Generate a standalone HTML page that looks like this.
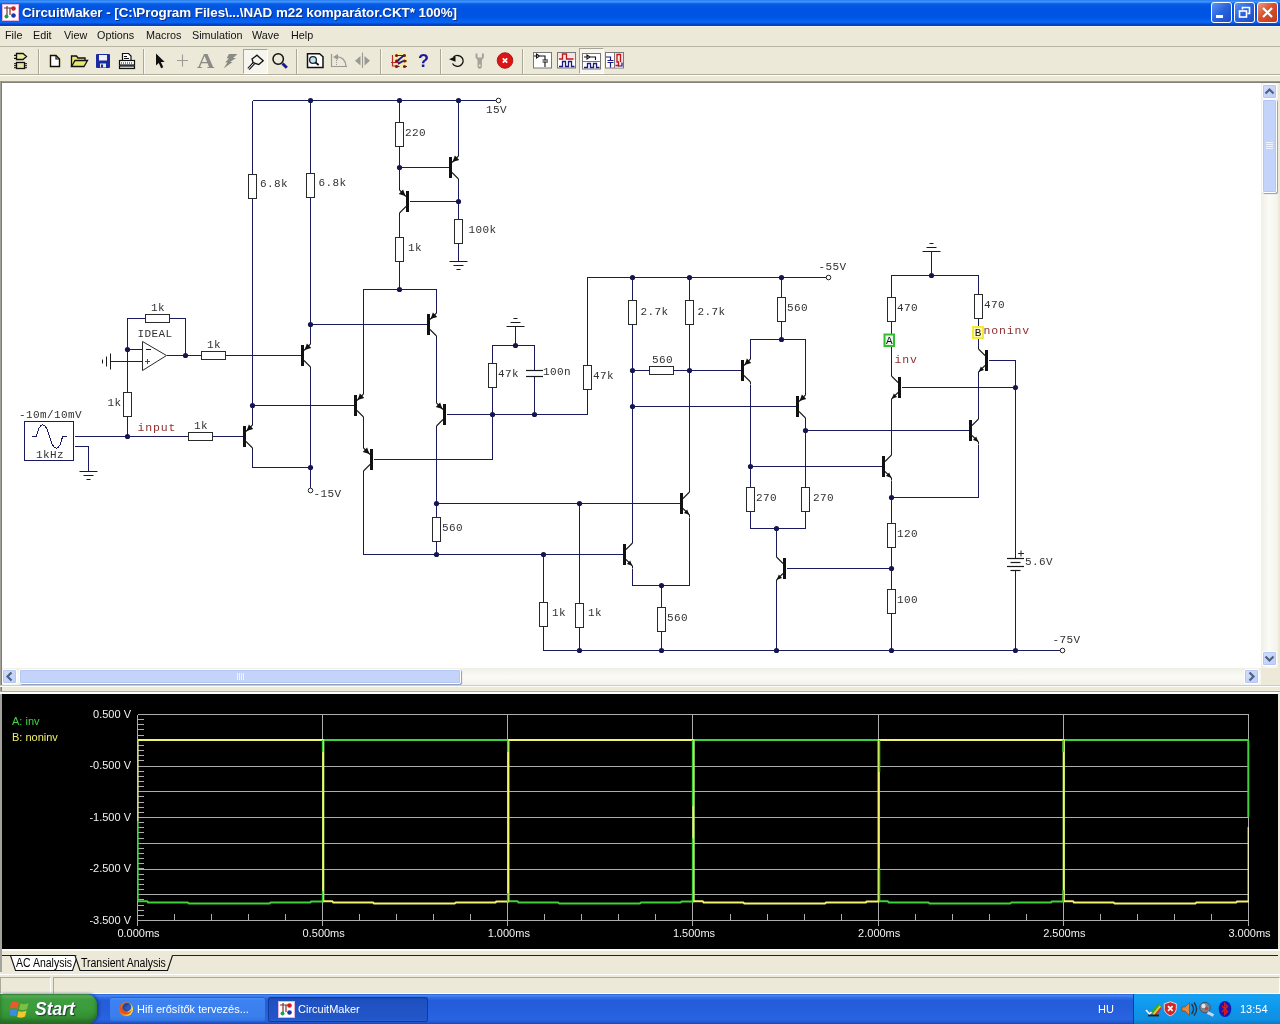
<!DOCTYPE html>
<html><head><meta charset="utf-8"><title>CircuitMaker</title>
<style>
html,body{margin:0;padding:0}
body{width:1280px;height:1024px;overflow:hidden;background:#ece9d8;position:relative;font-family:"Liberation Sans",sans-serif}
.abs{position:absolute}
svg{position:absolute;left:0;top:0}
#root{position:absolute;left:0;top:0;width:1280px;height:1024px;will-change:transform;overflow:hidden}
.w{stroke:#1a1a5e;stroke-width:1;fill:none;shape-rendering:crispEdges}
.k{stroke:#1a1a1a}
.d{fill:#15154f}
.t{fill:#fff;stroke:#222;stroke-width:1}
.r{fill:#fff;stroke:#2a2a2a;stroke-width:1}
.g{fill:#fff;stroke:#1a1a5e;stroke-width:1}
.b{fill:#111}
.a{fill:#111}
.tx{font-family:"Liberation Mono",monospace;font-size:11px;fill:#313131;letter-spacing:0.4px}
.lb{font-family:"Liberation Mono",monospace;font-size:11.5px;fill:#8f3030;letter-spacing:0.85px}
.pb{font-family:"Liberation Mono",monospace;font-size:11px;fill:#111}

#title{left:0;top:0;width:1280px;height:26px;background:linear-gradient(to bottom,#2a7af0 0px,#3d95fa 1.5px,#2c84f6 2.5px,#0f66ea 3.5px,#0458e2 5px,#0054e3 8px,#0054e3 17px,#035ae8 19px,#0864f0 21px,#0a62ee 22.5px,#0750d8 23.5px,#0444c4 24.5px,#0a3fb4 26px)}
#title .txt{left:22px;top:5px;color:#fff;font-weight:bold;font-size:13.4px;white-space:nowrap;text-shadow:1px 1px 0 #0a2f8a;letter-spacing:-0.05px}
.wb{top:2px;width:19px;height:19px;border:1px solid #fff;border-radius:3px;background:linear-gradient(135deg,#5a94f4 0%,#2a62dc 50%,#1c4cc8 100%)}
#menu{left:0;top:26px;width:1280px;height:20px;background:#ece9d8;border-top:1px solid #f4f3ec;box-sizing:border-box}
#menu span{position:absolute;top:2px;font-size:10.8px;color:#111;white-space:nowrap}
#tb{left:0;top:47px;width:1280px;height:27px;background:#ece9d8}
.hl{left:0;width:1280px;height:1px}
.sep{top:49px;width:1px;height:25px;background:#aca899;border-right:1px solid #f8f7f0}
#canvas{left:2px;top:83px;width:1259px;height:585px;background:#fff}
#vsb{left:1261px;top:83px;width:17px;height:585px;background:linear-gradient(to right,#f0efe6,#fbfbf7 50%,#f3f2ea)}
#hsb{left:2px;top:668px;width:1259px;height:17px;background:linear-gradient(to bottom,#f0efe6,#fbfbf7 50%,#f3f2ea)}
.sbtn{width:13px;height:13px;border:1px solid #fff;border-radius:2px;background:linear-gradient(135deg,#d4defb,#bccdf7);box-shadow:0 0 0 1px #b5c6f0 inset}
.thumb{border:1px solid #fff;border-radius:2px;background:#c3d3fa;box-shadow:0 0 0 1px #b4c6f2 inset, 1px 1px 1px #8a9ac0}
#tabs{left:0;top:949px;width:1280px;height:25px;background:#ece9d8}
#status{left:0;top:974px;width:1280px;height:20px;background:#ece9d8}
#task{left:0;top:994px;width:1280px;height:30px;background:linear-gradient(to bottom,#1f55c8 0%,#4a8af0 4%,#2f6ee8 12%,#245cda 22%,#255fdc 55%,#2864e2 85%,#2258d0 94%,#1a44b4 100%)}
#start{left:0;top:0;width:97px;height:30px;border-radius:0 11px 11px 0;background:linear-gradient(to bottom,#2f7e2f 0%,#55aa55 6%,#3f9e3f 18%,#3a9c3a 50%,#338f33 80%,#2a782a 100%);box-shadow:2px 0 3px #1a3f9a, inset 0 -3px 4px #256a25}
#start span{position:absolute;left:35px;top:5px;color:#fff;font-weight:bold;font-style:italic;font-size:17.5px;text-shadow:1px 1px 1px #234}
.tbtn{top:3px;height:25px;border-radius:3px;color:#fff;font-size:11px;white-space:nowrap}
.tbtn span{position:absolute;left:28px;top:6px}
#tray{left:1133px;top:0;width:147px;height:30px;background:linear-gradient(to bottom,#1c9df0 0%,#12a0f2 15%,#0f96ea 50%,#0f8fe2 85%,#0b78c8 100%);border-left:1px solid #0a3f9c}

#gpanel{left:2px;top:694px;width:1276px;height:255px;background:#000}
.gl{stroke:#adadad;stroke-width:1;shape-rendering:crispEdges}
.gt{font-family:"Liberation Sans",sans-serif;font-size:11px;fill:#f2f2f2}
</style></head><body><div id="root">

<div class="abs" id="title"><div class="abs txt">CircuitMaker - [C:\Program Files\...\NAD m22 komparátor.CKT* 100%]</div>
<svg class="abs" style="left:2px;top:4px" width="17" height="17" viewBox="0 0 17 17"><rect x="0.5" y="0.5" width="16" height="16" fill="#fff" stroke="#e8b0d8"/><path d="M2,4h8M5,2v9M8,4v7" stroke="#803030" stroke-width="1.2" fill="none"/><circle cx="11.5" cy="4.5" r="2.3" fill="#d02020"/><circle cx="11.5" cy="11.5" r="2.3" fill="#2030b0"/><circle cx="4.5" cy="12.5" r="2" fill="#20a040"/></svg>
<div class="abs wb" style="left:1211px"><div class="abs" style="left:4px;top:12px;width:7px;height:3px;background:#fff"></div></div>
<div class="abs wb" style="left:1234px"><svg class="abs" style="left:3px;top:3px" width="13" height="13"><path d="M4.5,3.5v-2h7v6h-2" fill="none" stroke="#fff" stroke-width="1.6"/><rect x="1.5" y="5" width="7" height="6" fill="none" stroke="#fff" stroke-width="1.6"/></svg></div>
<div class="abs wb" style="left:1257px;background:linear-gradient(135deg,#ea9a80 0%,#d8502c 45%,#c03a1c 100%)"><svg class="abs" style="left:3px;top:3px" width="13" height="13"><path d="M2,2l9,9M11,2l-9,9" stroke="#fff" stroke-width="2.2"/></svg></div>
</div>
<div class="abs" id="menu"><span style="left:5px">File</span><span style="left:33px">Edit</span><span style="left:64px">View</span><span style="left:97px">Options</span><span style="left:146px">Macros</span><span style="left:192px">Simulation</span><span style="left:252px">Wave</span><span style="left:291px">Help</span></div>
<div class="abs hl" style="top:46px;background:#b8b5a4"></div><div class="abs hl" style="top:47px;background:#fbfaf6"></div>
<div class="abs" id="tb"></div>
<div class="abs hl" style="top:74px;background:#b0ad9c"></div>
<div class="abs hl" style="top:75px;background:#fff"></div>
<div class="abs hl" style="top:81px;height:2px;background:linear-gradient(to bottom,#aaa89c,#77756c)"></div>
<div class="abs" style="left:0;top:81px;width:2px;height:612px;background:linear-gradient(to right,#b4b2a8,#6c6a62)"></div><div class="abs" style="left:0;top:693px;width:2px;height:258px;background:#a4a39c"></div>
<div class="abs sep" style="left:38px"></div>
<div class="abs sep" style="left:143px"></div>
<div class="abs sep" style="left:296px"></div>
<div class="abs sep" style="left:380px"></div>
<div class="abs sep" style="left:440px"></div>
<div class="abs sep" style="left:522px"></div>
<svg class="abs" style="left:13px;top:52px" width="16" height="18" viewBox="0 0 16 18"><path d="M1,3.300h2.500M1,6.300h2.500M3.500,1.500h6.500l3.500,3l-3.500,3h-6.500z" fill="#ececa0" stroke="#111" stroke-width="1.300"/><path d="M1,11.700h2.500M1,13.700h2.500M1,15.700h2.500M11.500,11.700h2.500M11.500,13.700h2.500M11.500,15.700h2.500" stroke="#111" stroke-width="1"/><rect x="3.500" y="10.500" width="8" height="6" fill="#e6e6a4" stroke="#111" stroke-width="1.300"/></svg>
<div class="abs" style="left:46px;top:51px;width:18px;height:20px;background:radial-gradient(closest-side,rgba(240,240,120,0.55),rgba(240,240,120,0))"></div>
<svg class="abs" style="left:49px;top:54px" width="12" height="14" viewBox="0 0 12 14"><path d="M1.5,1.5h5.5l3.5,3.5v7.5h-9z" fill="#fff" stroke="#111" stroke-width="1.4"/><path d="M7,1.5v3.5h3.5" fill="none" stroke="#111" stroke-width="1.2"/></svg>
<svg class="abs" style="left:70px;top:54px" width="19" height="14" viewBox="0 0 19 14"><path d="M1.5,12.5v-10.5h5l1.5,2h7v3" fill="#e8e870" stroke="#111" stroke-width="1.3"/><path d="M1.5,12.5l3.5-6h12.5l-3.5,6z" fill="#e8e870" stroke="#111" stroke-width="1.3"/></svg>
<svg class="abs" style="left:95px;top:53px" width="16" height="16" viewBox="0 0 16 16"><rect x="1" y="1" width="14" height="14" rx="1" fill="#1a2aa0"/><rect x="4" y="2" width="8" height="5.5" fill="#f0f0f0"/><rect x="4.5" y="10" width="7" height="5" fill="#1a2aa0" stroke="#ddd" stroke-width="0"/><rect x="5" y="10.5" width="6" height="4" fill="#e8e8e8"/><rect x="6" y="11.5" width="2" height="3" fill="#1a2aa0"/></svg>
<svg class="abs" style="left:118px;top:52px" width="18" height="18" viewBox="0 0 18 18"><path d="M4.5,8v-6.5h6l2.5,2.5v4" fill="#fff" stroke="#111" stroke-width="1.2"/><path d="M6,4.5h3M6,6.5h5" stroke="#111" stroke-width="1"/><rect x="1.5" y="8.5" width="15" height="4.5" fill="#fff" stroke="#111" stroke-width="1.2"/><path d="M3,11h12" stroke="#111" stroke-width="1" stroke-dasharray="1,1"/><rect x="1.5" y="14" width="15" height="2.5" fill="#ddd" stroke="#111" stroke-width="1.2"/></svg>
<svg class="abs" style="left:154px;top:52px" width="14" height="18" viewBox="0 0 14 18"><path d="M2,1.500v12l2.800-2.600l2.300,5.300l2.200-1l-2.400-5.200h3.800z" fill="#111"/></svg>
<svg class="abs" style="left:176px;top:54px" width="13" height="13" viewBox="0 0 13 13"><path d="M6.500,0.500v12M1,6.500h11" stroke="#9c9c94" stroke-width="1.100"/></svg>
<div class="abs" style="left:197px;top:48px;font-family:'Liberation Serif',serif;font-weight:bold;font-size:22px;color:#8c8c86;transform:scaleX(1.1);transform-origin:0 0">A</div>
<svg class="abs" style="left:222px;top:53px" width="17" height="16" viewBox="0 0 17 16"><path d="M7,1h8.500l-4.500,4h3l-6,4h2.500l-9,6.500l4-6h-2.200l3.600-4.200h-2.200z" fill="#8a8a84"/></svg>
<div class="abs" style="left:243px;top:49px;width:23px;height:23px;background:#f6f5ee;border:1px solid #fff;border-top-color:#a8a69a;border-left-color:#a8a69a"></div>
<svg class="abs" style="left:246px;top:52px" width="20" height="19" viewBox="0 0 20 19"><path d="M2.500,17l5.500-6" stroke="#111" stroke-width="3"/><path d="M2.500,17l5.500-6" stroke="#fff" stroke-width="1"/><path d="M11,3.200l6.200,5.600l-4.400,3.800l-5.600-1.900l-1.200-3.700z" fill="#f6f5ee" stroke="#111" stroke-width="1.300"/></svg>
<svg class="abs" style="left:271px;top:52px" width="18" height="18" viewBox="0 0 18 18"><circle cx="7.200" cy="7" r="5.200" fill="none" stroke="#111" stroke-width="1.500"/><path d="M11.500,11.500l4.300,4.300" stroke="#1a1a90" stroke-width="3"/></svg>
<svg class="abs" style="left:306px;top:52px" width="19" height="17" viewBox="0 0 19 17"><path d="M1.500,1.800h12l3.500,3v10.700h-15.500z" fill="#fff" stroke="#111" stroke-width="1.500"/><circle cx="7" cy="8" r="3.400" fill="#bfe8e8" stroke="#223" stroke-width="1.300"/><path d="M9.500,10.500l3.200,2.500" stroke="#111" stroke-width="1.800"/></svg>
<svg class="abs" style="left:330px;top:52px" width="18" height="18" viewBox="0 0 18 18"><path d="M1.500,2v12.500h15.500" fill="none" stroke="#9a9a92" stroke-width="1.200"/><path d="M6,5c6,-1 10,4 10,9.500" fill="none" stroke="#9a9a92" stroke-width="1.300"/><path d="M3,5l5-3v6z" fill="#9a9a92"/><path d="M6.500,8v6" stroke="#9a9a92" stroke-width="1" stroke-dasharray="1,1"/></svg>
<svg class="abs" style="left:354px;top:52px" width="18" height="17" viewBox="0 0 18 17"><path d="M6.500,4v9.500l-5.500-4.750z M10.500,4v9.500l5.500-4.750z" fill="#9a9a92"/><path d="M8.500,0.500v15.500" stroke="#9a9a92" stroke-width="1.100"/></svg>
<svg class="abs" style="left:389px;top:51px" width="20" height="19" viewBox="0 0 20 19"><circle cx="11" cy="9" r="8" fill="#f6ee90" opacity="0.650"/><path d="M3.500,4v11h6" stroke="#c02828" stroke-width="1.200" fill="none"/><path d="M2,11.500h8" stroke="#c02828" stroke-width="1"/><path d="M7.500,4.500h8M7.500,10h3M14,10h4M7.500,15.500h3M14,15.500h4" stroke="#6a1a1a" stroke-width="1"/><path d="M7.500,10.500l8-6.500M9,13l5-3" stroke="#1a1a98" stroke-width="1.700" fill="none"/><circle cx="7.500" cy="4.500" r="1.500" fill="#7a1414"/><circle cx="15.500" cy="4.500" r="1.500" fill="#7a1414"/><circle cx="7.500" cy="10" r="1.500" fill="#7a1414"/><circle cx="15.500" cy="10" r="1.500" fill="#7a1414"/><circle cx="7.500" cy="15.500" r="1.500" fill="#7a1414"/><circle cx="15.500" cy="15.500" r="1.500" fill="#7a1414"/></svg>
<div class="abs" style="left:418px;top:51px;font-weight:bold;font-size:18px;color:#1a1aa0">?</div>
<svg class="abs" style="left:447px;top:52px" width="20" height="18" viewBox="0 0 20 18"><path d="M6.500,5a5.700,5.400 0 1 1 -1,6.500" fill="none" stroke="#111" stroke-width="1.300"/><path d="M2,7.300l6.500-3v5.500z" fill="#111"/></svg>
<svg class="abs" style="left:474px;top:52px" width="12" height="18" viewBox="0 0 12 18"><path d="M1.500,1.500v4l2,2.500v6.500a2.200,2.200 0 0 0 4.400,0v-6.500l2-2.500v-4h-2v4h-4.400v-4z" fill="#a4a49c"/><circle cx="5.700" cy="13.500" r="1" fill="#ece9d8"/></svg>
<svg class="abs" style="left:496px;top:52px" width="18" height="18" viewBox="0 0 18 18"><circle cx="9" cy="8.500" r="7.800" fill="#dc1414" stroke="#9a0a0a" stroke-width="0.800"/><path d="M6.800,6.300l4.400,4.400M11.200,6.300l-4.400,4.400" stroke="#fff" stroke-width="1.800"/></svg>
<svg class="abs" style="left:533px;top:52px" width="19" height="17" viewBox="0 0 19 17"><rect x="0.500" y="0.500" width="18" height="15.500" fill="#fff" stroke="#777" stroke-width="1"/><path d="M1,4h2.500M3.500,2v4l3-2zM6.500,4h5.500v3.500M9.500,8h5.500M9.500,10h5.500M12,10v5" fill="none" stroke="#111" stroke-width="1.100"/></svg>
<svg class="abs" style="left:557px;top:52px" width="19" height="17" viewBox="0 0 19 17"><rect x="0.500" y="0.500" width="18" height="15.500" fill="#fff" stroke="#777" stroke-width="1"/><rect x="1" y="1" width="17" height="7" fill="#f6e4e4"/><path d="M2,7h3.500v-5h4v5h7" fill="none" stroke="#c01818" stroke-width="1.300"/><path d="M2,14.500h3.500v-5h3v5h3v-5h3v5h3" fill="none" stroke="#1a1a80" stroke-width="1.300"/></svg>
<div class="abs" style="left:579px;top:48px;width:23px;height:24px;background:#f6f5ee;border:1px solid #fff;border-top-color:#a8a69a;border-left-color:#a8a69a"></div>
<svg class="abs" style="left:582px;top:53px" width="19" height="17" viewBox="0 0 19 17"><rect x="0.500" y="0.500" width="18" height="15.500" fill="#fff" stroke="#777" stroke-width="1"/><path d="M1,8.500h17" stroke="#777" stroke-width="1"/><path d="M2,4h3M5,2v4l3-2zM8,4h5.500v3" fill="none" stroke="#111" stroke-width="1.100"/><path d="M2,14.500h3.500v-4h3v4h3v-4h3v4h3" fill="none" stroke="#1a1a80" stroke-width="1.300"/></svg>
<svg class="abs" style="left:605px;top:52px" width="19" height="17" viewBox="0 0 19 17"><rect x="0.500" y="0.500" width="18" height="15.500" fill="#fff" stroke="#777" stroke-width="1"/><rect x="9.500" y="1" width="8.500" height="14.500" fill="#f6e4e4"/><path d="M9.500,0.500v15.500" stroke="#777" stroke-width="1"/><path d="M1,5h4.500v3M2.500,8.500h6M2.500,10.500h6M5.500,10.500v5" fill="none" stroke="#1a1a80" stroke-width="1.200"/><path d="M10.500,13.500h3v-3.500h-1.500v-7.500h3.500v7.500" fill="none" stroke="#c01818" stroke-width="1.300"/><path d="M13,14h4v-3.500" fill="none" stroke="#1a1a80" stroke-width="1.200"/></svg>
<div class="abs" id="canvas"></div>
<div class="abs" id="vsb">
 <div class="abs sbtn" style="left:1px;top:1px"><svg class="abs" style="left:1px;top:2px" width="11" height="9"><path d="M1.5,6.5l4-4l4,4" fill="none" stroke="#4d6185" stroke-width="2.2"/></svg></div>
 <div class="abs thumb" style="left:1px;top:16px;width:13px;height:92px"><svg class="abs" style="left:3px;top:42px" width="8" height="8"><path d="M0,0.5h7M0,2.5h7M0,4.5h7M0,6.5h7" stroke="#eef3ff" stroke-width="1"/></svg></div>
 <div class="abs sbtn" style="left:1px;top:568px"><svg class="abs" style="left:1px;top:2px" width="11" height="9"><path d="M1.5,2.5l4,4l4-4" fill="none" stroke="#4d6185" stroke-width="2.2"/></svg></div>
</div>
<div class="abs" id="hsb">
 <div class="abs sbtn" style="left:0px;top:1px"><svg class="abs" style="left:2px;top:1px" width="9" height="11"><path d="M6.5,1.5l-4,4l4,4" fill="none" stroke="#4d6185" stroke-width="2.2"/></svg></div>
 <div class="abs thumb" style="left:17px;top:1px;width:440px;height:13px"><svg class="abs" style="left:217px;top:3px" width="8" height="8"><path d="M0.5,0v7M2.5,0v7M4.5,0v7M6.5,0v7" stroke="#eef3ff" stroke-width="1"/></svg></div>
 <div class="abs sbtn" style="left:1242px;top:1px"><svg class="abs" style="left:2px;top:1px" width="9" height="11"><path d="M2.5,1.5l4,4l-4,4" fill="none" stroke="#4d6185" stroke-width="2.2"/></svg></div>
</div>
<div class="abs" style="left:1261px;top:668px;width:19px;height:18px;background:#ece9d8"></div><div class="abs" style="left:1278px;top:83px;width:2px;height:600px;background:#ece9d8"></div>
<div class="abs hl" style="top:685px;background:#cfcdbf"></div><div class="abs hl" style="top:686px;background:#fdfdfa"></div>
<div class="abs hl" style="top:691px;background:#aca899"></div>
<div class="abs hl" style="top:692px;height:2px;background:#fff"></div>

<svg id="schem" width="1280" height="690" viewBox="0 0 1280 690">
<polyline class="w" points="252.5,100.5 495.5,100.5"/>
<circle class="t" cx="498.5" cy="100.5" r="2.3"/>
<text class="tx" x="486.0" y="112.7">15V</text>
<polyline class="w" points="252.5,100.5 252.5,174.5"/>
<rect class="r" x="248.5" y="174.5" width="8" height="24"/>
<polyline class="w" points="252.5,198.5 252.5,423.5"/>
<text class="tx" x="260.0" y="187.2">6.8k</text>
<polyline class="w" points="310.5,100.5 310.5,173.5"/>
<rect class="r" x="306.5" y="173.5" width="8" height="24"/>
<polyline class="w" points="310.5,197.5 310.5,343.5"/>
<text class="tx" x="318.5" y="186.2">6.8k</text>
<polyline class="w" points="310.5,368.5 310.5,487.5"/>
<circle class="t" cx="310.5" cy="490.5" r="2.3"/>
<text class="tx" x="313.5" y="496.7">-15V</text>
<polyline class="w" points="252.5,449.5 252.5,467.5 310.5,467.5"/>
<polyline class="w" points="399.5,100.5 399.5,122.5"/>
<rect class="r" x="395.5" y="122.5" width="8" height="24"/>
<polyline class="w" points="399.5,146.5 399.5,189.5"/>
<text class="tx" x="405.0" y="135.7">220</text>
<polyline class="w" points="399.5,167.5 449.5,167.5"/>
<polyline class="w" points="399.5,213.5 399.5,237.5"/>
<rect class="r" x="395.5" y="237.5" width="8" height="24"/>
<polyline class="w" points="399.5,261.5 399.5,289.5"/>
<text class="tx" x="408.0" y="250.7">1k</text>
<polyline class="w" points="458.5,100.5 458.5,155.5"/>
<polyline class="w" points="458.5,179.5 458.5,219.5"/>
<rect class="r" x="454.5" y="219.5" width="8" height="24"/>
<polyline class="w" points="458.5,243.5 458.5,261.5"/>
<text class="tx" x="468.5" y="232.7">100k</text>
<polyline class="w" points="409.5,201.5 458.5,201.5"/>
<line class="k" x1="449.5" y1="261.5" x2="467.5" y2="261.5" stroke-width="1"/>
<line class="k" x1="453.5" y1="265.5" x2="463.5" y2="265.5" stroke-width="1"/>
<line class="k" x1="456.5" y1="269.5" x2="460.5" y2="269.5" stroke-width="1"/>
<polyline class="w" points="363.5,393.5 363.5,289.5 436.5,289.5 436.5,311.5"/>
<polyline class="w" points="310.5,324.5 427.5,324.5"/>
<polyline class="w" points="436.5,337.5 436.5,402.5"/>
<polyline class="w" points="436.5,427.5 436.5,517.5"/>
<rect class="r" x="432.5" y="517.5" width="8" height="24"/>
<polyline class="w" points="436.5,541.5 436.5,554.5"/>
<text class="tx" x="442.0" y="530.7">560</text>
<polyline class="w" points="252.5,405.5 354.5,405.5"/>
<polyline class="w" points="363.5,418.5 363.5,447.5"/>
<polyline class="w" points="363.5,472.5 363.5,554.5 623.5,554.5"/>
<polyline class="w" points="373.5,459.5 492.5,459.5 492.5,387.5"/>
<rect class="r" x="488.5" y="363.5" width="8" height="24"/>
<polyline class="w" points="492.5,363.5 492.5,345.5 534.5,345.5 534.5,370.5"/>
<polyline class="w" points="534.5,376.5 534.5,414.5"/>
<text class="tx" x="498.0" y="377.2">47k</text>
<text class="tx" x="543.0" y="375.2">100n</text>
<polyline class="w" points="446.5,414.5 587.5,414.5 587.5,389.5"/>
<rect class="r" x="583.5" y="365.5" width="8" height="24"/>
<text class="tx" x="593.0" y="379.2">47k</text>
<polyline class="w" points="587.5,365.5 587.5,277.5 826.5,277.5"/>
<circle class="t" cx="828.5" cy="277.5" r="2.3"/>
<text class="tx" x="818.5" y="269.7">-55V</text>
<polyline class="w" points="515.5,326.5 515.5,345.5"/>
<line class="k" x1="506.5" y1="326.5" x2="524.5" y2="326.5" stroke-width="1"/>
<line class="k" x1="510.5" y1="322.5" x2="520.5" y2="322.5" stroke-width="1"/>
<line class="k" x1="513.5" y1="318.5" x2="517.5" y2="318.5" stroke-width="1"/>
<line class="k" x1="526.0" y1="370.5" x2="543.0" y2="370.5" stroke-width="1.2"/>
<line class="k" x1="526.0" y1="376.5" x2="543.0" y2="376.5" stroke-width="1.2"/>
<polyline class="w" points="127.5,349.5 127.5,318.5 145.5,318.5"/>
<rect class="r" x="145.5" y="314.5" width="24" height="8"/>
<polyline class="w" points="169.5,318.5 185.5,318.5 185.5,355.5"/>
<text class="tx" x="151.0" y="310.7">1k</text>
<text class="tx" x="137.5" y="337.2">IDEAL</text>
<polyline class="w" points="127.5,349.5 142.5,349.5"/>
<polyline class="w" points="110.5,361.5 142.5,361.5"/>
<line class="k" x1="110.5" y1="353.5" x2="110.5" y2="369.5" stroke-width="1"/>
<line class="k" x1="106.5" y1="356.5" x2="106.5" y2="366.5" stroke-width="1"/>
<line class="k" x1="102.5" y1="359.5" x2="102.5" y2="363.5" stroke-width="1"/>
<polyline class="w" points="166.5,355.5 201.5,355.5"/>
<rect class="r" x="201.5" y="351.5" width="24" height="8"/>
<polyline class="w" points="225.5,355.5 301.5,355.5"/>
<text class="tx" x="207.0" y="348.2">1k</text>
<polyline class="w" points="127.5,349.5 127.5,392.5"/>
<rect class="r" x="123.5" y="392.5" width="8" height="24"/>
<polyline class="w" points="127.5,416.5 127.5,436.5"/>
<text class="tx" x="107.5" y="405.7">1k</text>
<polyline class="w" points="74.5,436.5 188.5,436.5"/>
<rect class="r" x="188.5" y="432.5" width="24" height="8"/>
<polyline class="w" points="212.5,436.5 243.5,436.5"/>
<text class="tx" x="194.0" y="429.2">1k</text>
<text class="lb" x="137.5" y="431.2">input</text>
<polygon class="r" points="142.5,341.5 142.5,370.5 166.5,355.5"/>
<line class="k" x1="146.0" y1="349.5" x2="151.0" y2="349.5" stroke-width="1"/>
<path d="M145,361.5h5M147.5,359v5" stroke="#a02020" stroke-width="1" fill="none"/>
<rect class="g" x="24.5" y="421.5" width="49" height="39"/>
<path class="w" fill="none" d="M31.500,436.5h5 C39.500,421 45.500,421 49.500,436.500 C53.500,452 59.500,452 62.500,436.500 h4"/>
<text class="tx" x="19.0" y="418.2">-10m/10mV</text>
<text class="tx" x="36.0" y="457.7">1kHz</text>
<polyline class="w" points="74.5,446.5 88.5,446.5 88.5,471.5"/>
<line class="k" x1="79.5" y1="471.5" x2="97.5" y2="471.5" stroke-width="1"/>
<line class="k" x1="83.5" y1="475.5" x2="93.5" y2="475.5" stroke-width="1"/>
<line class="k" x1="86.5" y1="479.5" x2="90.5" y2="479.5" stroke-width="1"/>
<polyline class="w" points="632.5,277.5 632.5,300.5"/>
<rect class="r" x="628.5" y="300.5" width="8" height="24"/>
<polyline class="w" points="632.5,324.5 632.5,541.5"/>
<text class="tx" x="640.5" y="315.2">2.7k</text>
<polyline class="w" points="689.5,277.5 689.5,300.5"/>
<rect class="r" x="685.5" y="300.5" width="8" height="24"/>
<polyline class="w" points="689.5,324.5 689.5,491.5"/>
<text class="tx" x="697.5" y="315.2">2.7k</text>
<polyline class="w" points="632.5,370.5 649.5,370.5"/>
<rect class="r" x="649.5" y="366.5" width="24" height="8"/>
<polyline class="w" points="673.5,370.5 741.5,370.5"/>
<text class="tx" x="652.0" y="362.7">560</text>
<polyline class="w" points="781.5,277.5 781.5,297.5"/>
<rect class="r" x="777.5" y="297.5" width="8" height="24"/>
<polyline class="w" points="781.5,321.5 781.5,339.5"/>
<text class="tx" x="787.0" y="310.7">560</text>
<polyline class="w" points="750.5,357.5 750.5,339.5 805.5,339.5 805.5,393.5"/>
<polyline class="w" points="632.5,406.5 795.5,406.5"/>
<polyline class="w" points="750.5,384.5 750.5,487.5"/>
<rect class="r" x="746.5" y="487.5" width="8" height="24"/>
<polyline class="w" points="750.5,511.5 750.5,528.5 805.5,528.5 805.5,511.5"/>
<rect class="r" x="801.5" y="487.5" width="8" height="24"/>
<polyline class="w" points="805.5,487.5 805.5,419.5"/>
<text class="tx" x="756.0" y="500.7">270</text>
<text class="tx" x="813.0" y="500.7">270</text>
<polyline class="w" points="776.5,528.5 776.5,555.5"/>
<polyline class="w" points="776.5,581.5 776.5,650.5"/>
<polyline class="w" points="436.5,503.5 680.5,503.5"/>
<polyline class="w" points="579.5,503.5 579.5,603.5"/>
<rect class="r" x="575.5" y="603.5" width="8" height="24"/>
<polyline class="w" points="579.5,627.5 579.5,650.5"/>
<text class="tx" x="588.0" y="616.2">1k</text>
<polyline class="w" points="543.5,554.5 543.5,602.5"/>
<rect class="r" x="539.5" y="602.5" width="8" height="24"/>
<polyline class="w" points="543.5,626.5 543.5,650.5 1060.5,650.5"/>
<text class="tx" x="552.0" y="615.7">1k</text>
<circle class="t" cx="1062.5" cy="650.5" r="2.3"/>
<text class="tx" x="1052.5" y="642.7">-75V</text>
<polyline class="w" points="632.5,568.5 632.5,585.5 689.5,585.5 689.5,517.5"/>
<polyline class="w" points="661.5,585.5 661.5,607.5"/>
<rect class="r" x="657.5" y="607.5" width="8" height="24"/>
<polyline class="w" points="661.5,631.5 661.5,650.5"/>
<text class="tx" x="667.0" y="620.7">560</text>
<polyline class="w" points="805.5,430.5 969.5,430.5"/>
<polyline class="w" points="750.5,466.5 882.5,466.5"/>
<polyline class="w" points="786.5,568.5 891.5,568.5"/>
<polyline class="w" points="931.5,251.5 931.5,275.5"/>
<line class="k" x1="922.5" y1="251.5" x2="940.5" y2="251.5" stroke-width="1"/>
<line class="k" x1="926.5" y1="247.5" x2="936.5" y2="247.5" stroke-width="1"/>
<line class="k" x1="929.5" y1="243.5" x2="933.5" y2="243.5" stroke-width="1"/>
<polyline class="w" points="891.5,297.5 891.5,275.5 978.5,275.5 978.5,294.5"/>
<rect class="r" x="887.5" y="297.5" width="8" height="24"/>
<rect class="r" x="974.5" y="294.5" width="8" height="24"/>
<text class="tx" x="897.0" y="310.7">470</text>
<text class="tx" x="984.0" y="307.7">470</text>
<polyline class="w" points="891.5,321.5 891.5,374.5"/>
<polyline class="w" points="978.5,318.5 978.5,347.5"/>
<polyline class="w" points="891.5,400.5 891.5,453.5"/>
<polyline class="w" points="891.5,480.5 891.5,523.5"/>
<rect class="r" x="887.5" y="523.5" width="8" height="24"/>
<polyline class="w" points="891.5,547.5 891.5,589.5"/>
<rect class="r" x="887.5" y="589.5" width="8" height="24"/>
<polyline class="w" points="891.5,613.5 891.5,650.5"/>
<text class="tx" x="897.0" y="536.7">120</text>
<text class="tx" x="897.0" y="602.7">100</text>
<polyline class="w" points="891.5,497.5 978.5,497.5 978.5,444.5"/>
<polyline class="w" points="978.5,373.5 978.5,417.5"/>
<polyline class="w" points="901.5,387.5 1015.5,387.5"/>
<polyline class="w" points="988.5,360.5 1015.5,360.5 1015.5,558.5"/>
<polyline class="w" points="1015.5,570.5 1015.5,650.5"/>
<line class="k" x1="1007.0" y1="558.5" x2="1024.0" y2="558.5" stroke-width="1.2"/>
<line class="k" x1="1010.5" y1="562.5" x2="1020.5" y2="562.5" stroke-width="1.2"/>
<line class="k" x1="1007.0" y1="566.5" x2="1024.0" y2="566.5" stroke-width="1.2"/>
<line class="k" x1="1010.5" y1="570.5" x2="1020.5" y2="570.5" stroke-width="1.2"/>
<path d="M1018,553.5h6M1021,550.5v6" stroke="#222" stroke-width="1" fill="none"/>
<text class="tx" x="1025.0" y="564.7">5.6V</text>
<text class="lb" x="894.5" y="362.7">inv</text>
<text class="lb" x="983.5" y="333.7">noninv</text>
<rect x="884.5" y="334.5" width="9.5" height="11.5" fill="#eaf6ea" stroke="#2fbf2f" stroke-width="2"/>
<text class="pb" x="889.3" y="344.3" text-anchor="middle">A</text>
<rect x="973" y="327" width="10" height="11" fill="#fbf9c0" stroke="#f2ea35" stroke-width="2"/>
<text class="pb" x="978" y="336.3" text-anchor="middle">B</text>
<rect class="b" x="449.0" y="157.0" width="3" height="21"/>
<line class="k" x1="452.0" y1="162.5" x2="458.5" y2="156.0" stroke-width="1.1"/>
<line class="k" x1="452.0" y1="172.5" x2="458.5" y2="179.0" stroke-width="1.1"/>
<line class="k" x1="458.5" y1="156.0" x2="458.5" y2="153.5" stroke-width="1"/>
<line class="k" x1="458.5" y1="179.0" x2="458.5" y2="181.5" stroke-width="1"/>
<polygon class="a" points="452.50,162.10 459.28,160.12 454.90,155.46"/>
<rect class="b" x="406.0" y="191.0" width="3" height="21"/>
<line class="k" x1="406.0" y1="196.5" x2="399.5" y2="190.0" stroke-width="1.1"/>
<line class="k" x1="406.0" y1="206.5" x2="399.5" y2="213.0" stroke-width="1.1"/>
<line class="k" x1="399.5" y1="190.0" x2="399.5" y2="187.5" stroke-width="1"/>
<line class="k" x1="399.5" y1="213.0" x2="399.5" y2="215.5" stroke-width="1"/>
<polygon class="a" points="405.50,196.10 403.10,189.46 398.72,194.12"/>
<rect class="b" x="301.0" y="345.0" width="3" height="21"/>
<line class="k" x1="304.0" y1="350.5" x2="310.5" y2="344.0" stroke-width="1.1"/>
<line class="k" x1="304.0" y1="360.5" x2="310.5" y2="367.0" stroke-width="1.1"/>
<line class="k" x1="310.5" y1="344.0" x2="310.5" y2="341.5" stroke-width="1"/>
<line class="k" x1="310.5" y1="367.0" x2="310.5" y2="369.5" stroke-width="1"/>
<polygon class="a" points="304.50,350.10 311.28,348.12 306.90,343.46"/>
<rect class="b" x="243.0" y="426.0" width="3" height="21"/>
<line class="k" x1="246.0" y1="431.5" x2="252.5" y2="425.0" stroke-width="1.1"/>
<line class="k" x1="246.0" y1="441.5" x2="252.5" y2="448.0" stroke-width="1.1"/>
<line class="k" x1="252.5" y1="425.0" x2="252.5" y2="422.5" stroke-width="1"/>
<line class="k" x1="252.5" y1="448.0" x2="252.5" y2="450.5" stroke-width="1"/>
<polygon class="a" points="246.50,431.10 253.28,429.12 248.90,424.46"/>
<rect class="b" x="354.0" y="395.0" width="3" height="21"/>
<line class="k" x1="357.0" y1="400.5" x2="363.5" y2="394.0" stroke-width="1.1"/>
<line class="k" x1="357.0" y1="410.5" x2="363.5" y2="417.0" stroke-width="1.1"/>
<line class="k" x1="363.5" y1="394.0" x2="363.5" y2="391.5" stroke-width="1"/>
<line class="k" x1="363.5" y1="417.0" x2="363.5" y2="419.5" stroke-width="1"/>
<polygon class="a" points="357.50,400.10 364.28,398.12 359.90,393.46"/>
<rect class="b" x="370.0" y="449.0" width="3" height="21"/>
<line class="k" x1="370.0" y1="454.5" x2="363.5" y2="448.0" stroke-width="1.1"/>
<line class="k" x1="370.0" y1="464.5" x2="363.5" y2="471.0" stroke-width="1.1"/>
<line class="k" x1="363.5" y1="448.0" x2="363.5" y2="445.5" stroke-width="1"/>
<line class="k" x1="363.5" y1="471.0" x2="363.5" y2="473.5" stroke-width="1"/>
<polygon class="a" points="369.50,454.10 367.10,447.46 362.72,452.12"/>
<rect class="b" x="427.0" y="314.0" width="3" height="21"/>
<line class="k" x1="430.0" y1="319.5" x2="436.5" y2="313.0" stroke-width="1.1"/>
<line class="k" x1="430.0" y1="329.5" x2="436.5" y2="336.0" stroke-width="1.1"/>
<line class="k" x1="436.5" y1="313.0" x2="436.5" y2="310.5" stroke-width="1"/>
<line class="k" x1="436.5" y1="336.0" x2="436.5" y2="338.5" stroke-width="1"/>
<polygon class="a" points="430.50,319.10 437.28,317.12 432.90,312.46"/>
<rect class="b" x="443.0" y="404.0" width="3" height="21"/>
<line class="k" x1="443.0" y1="409.5" x2="436.5" y2="403.0" stroke-width="1.1"/>
<line class="k" x1="443.0" y1="419.5" x2="436.5" y2="426.0" stroke-width="1.1"/>
<line class="k" x1="436.5" y1="403.0" x2="436.5" y2="400.5" stroke-width="1"/>
<line class="k" x1="436.5" y1="426.0" x2="436.5" y2="428.5" stroke-width="1"/>
<polygon class="a" points="442.50,409.10 440.10,402.46 435.72,407.12"/>
<rect class="b" x="623.0" y="544.0" width="3" height="21"/>
<line class="k" x1="626.0" y1="549.5" x2="632.5" y2="543.0" stroke-width="1.1"/>
<line class="k" x1="626.0" y1="559.5" x2="632.5" y2="566.0" stroke-width="1.1"/>
<line class="k" x1="632.5" y1="543.0" x2="632.5" y2="540.5" stroke-width="1"/>
<line class="k" x1="632.5" y1="566.0" x2="632.5" y2="568.5" stroke-width="1"/>
<polygon class="a" points="632.20,565.70 630.20,560.53 626.91,564.03"/>
<rect class="b" x="680.0" y="493.0" width="3" height="21"/>
<line class="k" x1="683.0" y1="498.5" x2="689.5" y2="492.0" stroke-width="1.1"/>
<line class="k" x1="683.0" y1="508.5" x2="689.5" y2="515.0" stroke-width="1.1"/>
<line class="k" x1="689.5" y1="492.0" x2="689.5" y2="489.5" stroke-width="1"/>
<line class="k" x1="689.5" y1="515.0" x2="689.5" y2="517.5" stroke-width="1"/>
<polygon class="a" points="689.20,514.70 687.20,509.53 683.91,513.03"/>
<rect class="b" x="741.0" y="360.0" width="3" height="21"/>
<line class="k" x1="744.0" y1="365.5" x2="750.5" y2="359.0" stroke-width="1.1"/>
<line class="k" x1="744.0" y1="375.5" x2="750.5" y2="382.0" stroke-width="1.1"/>
<line class="k" x1="750.5" y1="359.0" x2="750.5" y2="356.5" stroke-width="1"/>
<line class="k" x1="750.5" y1="382.0" x2="750.5" y2="384.5" stroke-width="1"/>
<polygon class="a" points="744.50,365.10 751.28,363.12 746.90,358.46"/>
<rect class="b" x="796.0" y="396.0" width="3" height="21"/>
<line class="k" x1="799.0" y1="401.5" x2="805.5" y2="395.0" stroke-width="1.1"/>
<line class="k" x1="799.0" y1="411.5" x2="805.5" y2="418.0" stroke-width="1.1"/>
<line class="k" x1="805.5" y1="395.0" x2="805.5" y2="392.5" stroke-width="1"/>
<line class="k" x1="805.5" y1="418.0" x2="805.5" y2="420.5" stroke-width="1"/>
<polygon class="a" points="799.50,401.10 806.28,399.12 801.90,394.46"/>
<rect class="b" x="783.0" y="558.0" width="3" height="21"/>
<line class="k" x1="783.0" y1="563.5" x2="776.5" y2="557.0" stroke-width="1.1"/>
<line class="k" x1="783.0" y1="573.5" x2="776.5" y2="580.0" stroke-width="1.1"/>
<line class="k" x1="776.5" y1="557.0" x2="776.5" y2="554.5" stroke-width="1"/>
<line class="k" x1="776.5" y1="580.0" x2="776.5" y2="582.5" stroke-width="1"/>
<polygon class="a" points="776.80,579.70 782.09,578.03 778.80,574.53"/>
<rect class="b" x="898.0" y="377.0" width="3" height="21"/>
<line class="k" x1="898.0" y1="382.5" x2="891.5" y2="376.0" stroke-width="1.1"/>
<line class="k" x1="898.0" y1="392.5" x2="891.5" y2="399.0" stroke-width="1.1"/>
<line class="k" x1="891.5" y1="376.0" x2="891.5" y2="373.5" stroke-width="1"/>
<line class="k" x1="891.5" y1="399.0" x2="891.5" y2="401.5" stroke-width="1"/>
<polygon class="a" points="891.80,398.70 897.09,397.03 893.80,393.53"/>
<rect class="b" x="985.0" y="350.0" width="3" height="21"/>
<line class="k" x1="985.0" y1="355.5" x2="978.5" y2="349.0" stroke-width="1.1"/>
<line class="k" x1="985.0" y1="365.5" x2="978.5" y2="372.0" stroke-width="1.1"/>
<line class="k" x1="978.5" y1="349.0" x2="978.5" y2="346.5" stroke-width="1"/>
<line class="k" x1="978.5" y1="372.0" x2="978.5" y2="374.5" stroke-width="1"/>
<polygon class="a" points="978.80,371.70 984.09,370.03 980.80,366.53"/>
<rect class="b" x="969.0" y="420.0" width="3" height="21"/>
<line class="k" x1="972.0" y1="425.5" x2="978.5" y2="419.0" stroke-width="1.1"/>
<line class="k" x1="972.0" y1="435.5" x2="978.5" y2="442.0" stroke-width="1.1"/>
<line class="k" x1="978.5" y1="419.0" x2="978.5" y2="416.5" stroke-width="1"/>
<line class="k" x1="978.5" y1="442.0" x2="978.5" y2="444.5" stroke-width="1"/>
<polygon class="a" points="978.20,441.70 976.20,436.53 972.91,440.03"/>
<rect class="b" x="882.0" y="456.0" width="3" height="21"/>
<line class="k" x1="885.0" y1="461.5" x2="891.5" y2="455.0" stroke-width="1.1"/>
<line class="k" x1="885.0" y1="471.5" x2="891.5" y2="478.0" stroke-width="1.1"/>
<line class="k" x1="891.5" y1="455.0" x2="891.5" y2="452.5" stroke-width="1"/>
<line class="k" x1="891.5" y1="478.0" x2="891.5" y2="480.5" stroke-width="1"/>
<polygon class="a" points="891.20,477.70 889.20,472.53 885.91,476.03"/>
<circle class="d" cx="310.5" cy="100.5" r="2.6"/>
<circle class="d" cx="399.5" cy="100.5" r="2.6"/>
<circle class="d" cx="458.5" cy="100.5" r="2.6"/>
<circle class="d" cx="399.5" cy="167.5" r="2.6"/>
<circle class="d" cx="458.5" cy="201.5" r="2.6"/>
<circle class="d" cx="399.5" cy="289.5" r="2.6"/>
<circle class="d" cx="310.5" cy="324.5" r="2.6"/>
<circle class="d" cx="252.5" cy="405.5" r="2.6"/>
<circle class="d" cx="310.5" cy="467.5" r="2.6"/>
<circle class="d" cx="127.5" cy="349.5" r="2.6"/>
<circle class="d" cx="185.5" cy="355.5" r="2.6"/>
<circle class="d" cx="127.5" cy="436.5" r="2.6"/>
<circle class="d" cx="436.5" cy="503.5" r="2.6"/>
<circle class="d" cx="436.5" cy="554.5" r="2.6"/>
<circle class="d" cx="492.5" cy="414.5" r="2.6"/>
<circle class="d" cx="534.5" cy="414.5" r="2.6"/>
<circle class="d" cx="515.5" cy="345.5" r="2.6"/>
<circle class="d" cx="632.5" cy="277.5" r="2.6"/>
<circle class="d" cx="689.5" cy="277.5" r="2.6"/>
<circle class="d" cx="781.5" cy="277.5" r="2.6"/>
<circle class="d" cx="632.5" cy="370.5" r="2.6"/>
<circle class="d" cx="689.5" cy="370.5" r="2.6"/>
<circle class="d" cx="632.5" cy="406.5" r="2.6"/>
<circle class="d" cx="781.5" cy="339.5" r="2.6"/>
<circle class="d" cx="805.5" cy="430.5" r="2.6"/>
<circle class="d" cx="750.5" cy="466.5" r="2.6"/>
<circle class="d" cx="776.5" cy="528.5" r="2.6"/>
<circle class="d" cx="579.5" cy="503.5" r="2.6"/>
<circle class="d" cx="543.5" cy="554.5" r="2.6"/>
<circle class="d" cx="579.5" cy="650.5" r="2.6"/>
<circle class="d" cx="661.5" cy="585.5" r="2.6"/>
<circle class="d" cx="661.5" cy="650.5" r="2.6"/>
<circle class="d" cx="776.5" cy="650.5" r="2.6"/>
<circle class="d" cx="891.5" cy="650.5" r="2.6"/>
<circle class="d" cx="1015.5" cy="650.5" r="2.6"/>
<circle class="d" cx="891.5" cy="568.5" r="2.6"/>
<circle class="d" cx="891.5" cy="497.5" r="2.6"/>
<circle class="d" cx="1015.5" cy="387.5" r="2.6"/>
<circle class="d" cx="931.5" cy="275.5" r="2.6"/>
</svg>
<div class="abs" id="gpanel"></div>
<div class="abs" style="left:1278px;top:693px;width:2px;height:256px;background:#ece9d8"></div>
<svg width="1280" height="1024" viewBox="0 0 1280 1024" style="pointer-events:none">
<line class="gl" x1="137.5" y1="714.5" x2="1248.5" y2="714.5"/>
<line class="gl" x1="137.5" y1="740.5" x2="1248.5" y2="740.5"/>
<line class="gl" x1="137.5" y1="766.5" x2="1248.5" y2="766.5"/>
<line class="gl" x1="137.5" y1="791.5" x2="1248.5" y2="791.5"/>
<line class="gl" x1="137.5" y1="817.5" x2="1248.5" y2="817.5"/>
<line class="gl" x1="137.5" y1="843.5" x2="1248.5" y2="843.5"/>
<line class="gl" x1="137.5" y1="869.5" x2="1248.5" y2="869.5"/>
<line class="gl" x1="137.5" y1="894.5" x2="1248.5" y2="894.5"/>
<line class="gl" x1="137.5" y1="920.5" x2="1248.5" y2="920.5"/>
<line class="gl" x1="137.5" y1="714.5" x2="137.5" y2="925.5"/>
<line class="gl" x1="322.5" y1="714.5" x2="322.5" y2="925.5"/>
<line class="gl" x1="507.5" y1="714.5" x2="507.5" y2="925.5"/>
<line class="gl" x1="692.5" y1="714.5" x2="692.5" y2="925.5"/>
<line class="gl" x1="878.5" y1="714.5" x2="878.5" y2="925.5"/>
<line class="gl" x1="1063.5" y1="714.5" x2="1063.5" y2="925.5"/>
<line class="gl" x1="1248.5" y1="714.5" x2="1248.5" y2="925.5"/>
<line class="gl" x1="137.5" y1="714.5" x2="143.5" y2="714.5"/>
<line class="gl" x1="137.5" y1="719.5" x2="143.5" y2="719.5"/>
<line class="gl" x1="137.5" y1="724.5" x2="143.5" y2="724.5"/>
<line class="gl" x1="137.5" y1="729.5" x2="143.5" y2="729.5"/>
<line class="gl" x1="137.5" y1="735.5" x2="143.5" y2="735.5"/>
<line class="gl" x1="137.5" y1="740.5" x2="143.5" y2="740.5"/>
<line class="gl" x1="137.5" y1="745.5" x2="143.5" y2="745.5"/>
<line class="gl" x1="137.5" y1="750.5" x2="143.5" y2="750.5"/>
<line class="gl" x1="137.5" y1="755.5" x2="143.5" y2="755.5"/>
<line class="gl" x1="137.5" y1="760.5" x2="143.5" y2="760.5"/>
<line class="gl" x1="137.5" y1="766.5" x2="143.5" y2="766.5"/>
<line class="gl" x1="137.5" y1="771.5" x2="143.5" y2="771.5"/>
<line class="gl" x1="137.5" y1="776.5" x2="143.5" y2="776.5"/>
<line class="gl" x1="137.5" y1="781.5" x2="143.5" y2="781.5"/>
<line class="gl" x1="137.5" y1="786.5" x2="143.5" y2="786.5"/>
<line class="gl" x1="137.5" y1="791.5" x2="143.5" y2="791.5"/>
<line class="gl" x1="137.5" y1="796.5" x2="143.5" y2="796.5"/>
<line class="gl" x1="137.5" y1="802.5" x2="143.5" y2="802.5"/>
<line class="gl" x1="137.5" y1="807.5" x2="143.5" y2="807.5"/>
<line class="gl" x1="137.5" y1="812.5" x2="143.5" y2="812.5"/>
<line class="gl" x1="137.5" y1="817.5" x2="143.5" y2="817.5"/>
<line class="gl" x1="137.5" y1="822.5" x2="143.5" y2="822.5"/>
<line class="gl" x1="137.5" y1="827.5" x2="143.5" y2="827.5"/>
<line class="gl" x1="137.5" y1="832.5" x2="143.5" y2="832.5"/>
<line class="gl" x1="137.5" y1="838.5" x2="143.5" y2="838.5"/>
<line class="gl" x1="137.5" y1="843.5" x2="143.5" y2="843.5"/>
<line class="gl" x1="137.5" y1="848.5" x2="143.5" y2="848.5"/>
<line class="gl" x1="137.5" y1="853.5" x2="143.5" y2="853.5"/>
<line class="gl" x1="137.5" y1="858.5" x2="143.5" y2="858.5"/>
<line class="gl" x1="137.5" y1="863.5" x2="143.5" y2="863.5"/>
<line class="gl" x1="137.5" y1="868.5" x2="143.5" y2="868.5"/>
<line class="gl" x1="137.5" y1="874.5" x2="143.5" y2="874.5"/>
<line class="gl" x1="137.5" y1="879.5" x2="143.5" y2="879.5"/>
<line class="gl" x1="137.5" y1="884.5" x2="143.5" y2="884.5"/>
<line class="gl" x1="137.5" y1="889.5" x2="143.5" y2="889.5"/>
<line class="gl" x1="137.5" y1="894.5" x2="143.5" y2="894.5"/>
<line class="gl" x1="137.5" y1="899.5" x2="143.5" y2="899.5"/>
<line class="gl" x1="137.5" y1="905.5" x2="143.5" y2="905.5"/>
<line class="gl" x1="137.5" y1="910.5" x2="143.5" y2="910.5"/>
<line class="gl" x1="137.5" y1="915.5" x2="143.5" y2="915.5"/>
<line class="gl" x1="137.5" y1="920.5" x2="143.5" y2="920.5"/>
<line class="gl" x1="137.5" y1="913.5" x2="137.5" y2="920.5"/>
<line class="gl" x1="174.5" y1="913.5" x2="174.5" y2="920.5"/>
<line class="gl" x1="211.5" y1="913.5" x2="211.5" y2="920.5"/>
<line class="gl" x1="248.5" y1="913.5" x2="248.5" y2="920.5"/>
<line class="gl" x1="285.5" y1="913.5" x2="285.5" y2="920.5"/>
<line class="gl" x1="322.5" y1="913.5" x2="322.5" y2="920.5"/>
<line class="gl" x1="359.5" y1="913.5" x2="359.5" y2="920.5"/>
<line class="gl" x1="396.5" y1="913.5" x2="396.5" y2="920.5"/>
<line class="gl" x1="433.5" y1="913.5" x2="433.5" y2="920.5"/>
<line class="gl" x1="470.5" y1="913.5" x2="470.5" y2="920.5"/>
<line class="gl" x1="507.5" y1="913.5" x2="507.5" y2="920.5"/>
<line class="gl" x1="544.5" y1="913.5" x2="544.5" y2="920.5"/>
<line class="gl" x1="581.5" y1="913.5" x2="581.5" y2="920.5"/>
<line class="gl" x1="618.5" y1="913.5" x2="618.5" y2="920.5"/>
<line class="gl" x1="655.5" y1="913.5" x2="655.5" y2="920.5"/>
<line class="gl" x1="692.5" y1="913.5" x2="692.5" y2="920.5"/>
<line class="gl" x1="730.5" y1="913.5" x2="730.5" y2="920.5"/>
<line class="gl" x1="767.5" y1="913.5" x2="767.5" y2="920.5"/>
<line class="gl" x1="804.5" y1="913.5" x2="804.5" y2="920.5"/>
<line class="gl" x1="841.5" y1="913.5" x2="841.5" y2="920.5"/>
<line class="gl" x1="878.5" y1="913.5" x2="878.5" y2="920.5"/>
<line class="gl" x1="915.5" y1="913.5" x2="915.5" y2="920.5"/>
<line class="gl" x1="952.5" y1="913.5" x2="952.5" y2="920.5"/>
<line class="gl" x1="989.5" y1="913.5" x2="989.5" y2="920.5"/>
<line class="gl" x1="1026.5" y1="913.5" x2="1026.5" y2="920.5"/>
<line class="gl" x1="1063.5" y1="913.5" x2="1063.5" y2="920.5"/>
<line class="gl" x1="1100.5" y1="913.5" x2="1100.5" y2="920.5"/>
<line class="gl" x1="1137.5" y1="913.5" x2="1137.5" y2="920.5"/>
<line class="gl" x1="1174.5" y1="913.5" x2="1174.5" y2="920.5"/>
<line class="gl" x1="1211.5" y1="913.5" x2="1211.5" y2="920.5"/>
<line class="gl" x1="1248.5" y1="913.5" x2="1248.5" y2="920.5"/>
<text class="gt" x="131" y="717.8" text-anchor="end">0.500 V</text>
<text class="gt" x="131" y="769.3" text-anchor="end">-0.500 V</text>
<text class="gt" x="131" y="820.8" text-anchor="end">-1.500 V</text>
<text class="gt" x="131" y="872.3" text-anchor="end">-2.500 V</text>
<text class="gt" x="131" y="923.8" text-anchor="end">-3.500 V</text>
<text class="gt" x="138.5" y="937" text-anchor="middle">0.000ms</text>
<text class="gt" x="323.7" y="937" text-anchor="middle">0.500ms</text>
<text class="gt" x="508.8" y="937" text-anchor="middle">1.000ms</text>
<text class="gt" x="694.0" y="937" text-anchor="middle">1.500ms</text>
<text class="gt" x="879.2" y="937" text-anchor="middle">2.000ms</text>
<text class="gt" x="1064.3" y="937" text-anchor="middle">2.500ms</text>
<text class="gt" x="1249.5" y="937" text-anchor="middle">3.000ms</text>
<text class="gt" x="12" y="725" style="fill:#44d444">A: inv</text>
<text class="gt" x="12" y="741" style="fill:#f0f06a">B: noninv</text>
<polyline points="138.0,901.3 147.3,901.3 148.2,902.6 188.0,902.6 188.9,903.6 269.5,903.6 270.4,902.6 310.2,902.6 311.1,901.5 323.2,901.5 323.2,740.0 508.3,740.0 508.3,901.3 517.6,901.3 518.5,902.6 558.3,902.6 559.3,903.6 639.8,903.6 640.7,902.6 680.5,902.6 681.5,901.5 693.5,901.5 693.5,740.0 878.7,740.0 878.7,901.3 887.9,901.3 888.9,902.6 928.7,902.6 929.6,903.6 1010.1,903.6 1011.1,902.6 1050.9,902.6 1051.8,901.5 1063.8,901.5 1063.8,740.0 1249.0,740.0" fill="none" stroke="#3fd23a" stroke-width="2.0" stroke-linejoin="round"/>
<polyline points="1248.3,740.0 1248.3,817.0" fill="none" stroke="#3fd23a" stroke-width="2.0" stroke-linejoin="round"/>
<polyline points="138.0,740.0 323.2,740.0 323.2,901.3 332.4,901.3 333.4,902.6 373.2,902.6 374.1,903.6 454.6,903.6 455.6,902.6 495.4,902.6 496.3,901.5 508.3,901.5 508.3,740.0 693.5,740.0 693.5,901.3 702.8,901.3 703.7,902.6 743.5,902.6 744.4,903.6 825.0,903.6 825.9,902.6 865.7,902.6 866.6,901.5 878.7,901.5 878.7,740.0 1063.8,740.0 1063.8,901.3 1073.1,901.3 1074.0,902.6 1113.8,902.6 1114.8,903.6 1195.3,903.6 1196.2,902.6 1236.0,902.6 1237.0,901.5 1249.0,901.5" fill="none" stroke="#f4f46a" stroke-width="2.0" stroke-linejoin="round"/>
<polyline points="1248.3,827.0 1248.3,902.0" fill="none" stroke="#e8e8b0" stroke-width="1.4" stroke-linejoin="round"/>
<polyline points="322.6,740.0 322.6,752.0" fill="none" stroke="#3fd23a" stroke-width="1.5" stroke-linejoin="round"/>
<polyline points="322.6,891.0 322.6,902.0" fill="none" stroke="#3fd23a" stroke-width="1.5" stroke-linejoin="round"/>
<polyline points="507.7,740.0 507.7,752.0" fill="none" stroke="#3fd23a" stroke-width="1.5" stroke-linejoin="round"/>
<polyline points="507.7,893.0 507.7,902.0" fill="none" stroke="#3fd23a" stroke-width="1.5" stroke-linejoin="round"/>
<polyline points="692.6,740.0 692.6,806.0" fill="none" stroke="#3fd23a" stroke-width="1.5" stroke-linejoin="round"/>
<polyline points="692.6,838.0 692.6,902.0" fill="none" stroke="#3fd23a" stroke-width="1.5" stroke-linejoin="round"/>
<polyline points="879.5,740.0 879.5,772.0" fill="none" stroke="#3fd23a" stroke-width="1.5" stroke-linejoin="round"/>
<polyline points="879.5,868.0 879.5,902.0" fill="none" stroke="#3fd23a" stroke-width="1.5" stroke-linejoin="round"/>
<polyline points="1063.2,740.0 1063.2,752.0" fill="none" stroke="#3fd23a" stroke-width="1.5" stroke-linejoin="round"/>
<polyline points="1063.2,890.0 1063.2,902.0" fill="none" stroke="#3fd23a" stroke-width="1.5" stroke-linejoin="round"/>
<polyline points="138.0,741.0 138.0,821.0" fill="none" stroke="#e4e49a" stroke-width="1.3" stroke-linejoin="round"/>
<polyline points="138.0,821.0 138.0,901.0" fill="none" stroke="#3fd23a" stroke-width="1.4" stroke-linejoin="round"/>
</svg>

<div class="abs" id="tabs">
 <div class="abs hl" style="top:0;height:2px;background:#fbfaf4"></div>
 <svg class="abs" style="left:0;top:0" width="1280" height="26" viewBox="0 0 1280 26">
  <path d="M172,6.5H1278M2,6.500H11" stroke="#222" stroke-width="1" fill="none"/><rect x="0" y="0" width="2" height="23" fill="#a4a39c"/>
  <path d="M10.5,6.5 L15.5,21.500 H72.500 L77,8 L76,6.500 Z" fill="#fff" stroke="#111" stroke-width="1.1"/>
  <path d="M75,6.500 L80,21.500 H167.500 L172.500,6.500" fill="#ece9d8" stroke="#111" stroke-width="1.1"/>
 </svg>
 <span class="abs" style="left:15.5px;top:6.500px;font-size:12px;color:#000;white-space:nowrap;transform:scaleX(0.875);transform-origin:0 0">AC Analysis</span>
 <span class="abs" style="left:81px;top:6.500px;font-size:12px;color:#000;white-space:nowrap;transform:scaleX(0.875);transform-origin:0 0">Transient Analysis</span>
</div>
<div class="abs" id="status">
 <div class="abs hl" style="top:19px;background:#fff"></div>
 <div class="abs hl" style="top:0;background:#fff"></div>
 <div class="abs" style="left:0;top:3px;width:49px;height:15px;border:1px solid #aca899;border-right-color:#fff;border-bottom-color:#fff"></div>
 <div class="abs" style="left:53px;top:3px;width:1225px;height:15px;border:1px solid #aca899;border-right-color:#fff;border-bottom-color:#fff"></div>
</div>
<div class="abs" id="task">
 <div class="abs" id="start"><svg class="abs" style="left:10px;top:6px" width="20" height="19" viewBox="0 0 20 19"><path d="M1,3c3-2 5-1 8,0l-1.5,6c-3-1-5-1.5-8,0z" fill="#e85a2a"/><path d="M10.5,3.5c3,1 5,1 8-0.5l-1.5,6c-3,1.5-5,1.5-8,0.5z" fill="#7ac043"/><path d="M-0.5,10.500c3-1.5 5-1 8,0l-1.5,6c-3-1-5-1.500-8,0z" fill="#3b8de0"/><path d="M8.500,11c3,1 5,1 8-0.500l-1.5,6c-3,1.500-5,1.500-8,0.500z" fill="#f5c52a"/></svg><span>Start</span></div>
 <div class="abs tbtn" style="left:109px;width:157px;background:linear-gradient(to bottom,#5a9af8 0%,#3c82f0 12%,#3a7eec 80%,#2f6fe0 100%);box-shadow:0 0 0 1px #2a5fd0 inset">
  <svg class="abs" style="left:9px;top:4px" width="16" height="16" viewBox="0 0 16 16"><defs><linearGradient id="ff" x1="0" y1="0" x2="1" y2="0.300"><stop offset="0" stop-color="#e0481c"/><stop offset="0.550" stop-color="#f08a20"/><stop offset="1" stop-color="#f8e040"/></linearGradient></defs><circle cx="8" cy="8.200" r="7" fill="url(#ff)"/><circle cx="9" cy="6" r="4.300" fill="#2a5cc0"/><path d="M5.500,3.500c2-2 5-1.500 6.500,0c-2,0-3,0.500-3.500,2c-1,0-2,1-1.500,2.500c0.500,1.300 2.500,1.700 4,0.700c-0.500,2-3,3-5,2c-2-1-2.500-5-0.500-7.200z" fill="#1a3a88" opacity="0.550"/><path d="M2.500,5c-1.500,3.500 0.500,8.500 5.500,8.500c3.500,0 5.500-2.500 5.800-5c-1,2-3,3-5.300,2.600c-3-0.600-4.300-3.600-6-6.100z" fill="#e8501c"/></svg>
  <span>Hifi erősítők tervezés...</span></div>
 <div class="abs tbtn" style="left:268px;width:160px;background:linear-gradient(to bottom,#1a48b0 0%,#1f50c0 15%,#2256c8 85%,#2a60d0 100%);box-shadow:0 0 0 1px #143a98 inset">
  <svg class="abs" style="left:10px;top:4px" width="17" height="17" viewBox="0 0 17 17"><rect x="0.5" y="0.5" width="16" height="16" fill="#fff" stroke="#e8b0d8"/><path d="M2,4h8M5,2v9M8,4v7" stroke="#803030" stroke-width="1.2" fill="none"/><circle cx="11.5" cy="4.500" r="2.300" fill="#d02020"/><circle cx="11.500" cy="11.500" r="2.300" fill="#2030b0"/><circle cx="4.500" cy="12.500" r="2" fill="#20a040"/></svg>
  <span style="left:30px">CircuitMaker</span></div>
 <span class="abs" style="left:1098px;top:9px;color:#fff;font-size:11px">HU</span>
 <div class="abs" id="tray">
  <svg class="abs" style="left:10px;top:7px" width="120" height="18" viewBox="0 0 120 18">
   <path d="M6,12l8-9.500l3,2.500l-7,9z" fill="#38a838"/><path d="M8.500,13l7-8.500l1.500,1.200l-6.500,8.600z" fill="#e8d020"/><path d="M10,14.200l6.500-8l1,1l-5.500,8z" fill="#d83020"/>
   <path d="M2,9l3.500,4l2-2" fill="none" stroke="#f4f4f4" stroke-width="1.600"/><path d="M4,14.500h11" stroke="#222" stroke-width="1.800"/>
   <path d="M26.300,0.800l6,2v4.500c0,3.700-2.600,6-6,7.500c-3.400-1.500-6-3.800-6-7.500v-4.500z" fill="#d42424" stroke="#e8d8d8" stroke-width="1"/><path d="M24,5.200l4.600,4.600M28.600,5.200l-4.600,4.600" stroke="#fff" stroke-width="1.700"/>
   <path d="M38,6h3l4.500-4.500v13l-4.500-4.500h-3z" fill="#e8883a" stroke="#8a4410" stroke-width="0.700"/><path d="M47.500,3c2.500,3 2.500,7 0,10M50,1.500c3.200,4 3.200,9 0,13" fill="none" stroke="#2a2a3a" stroke-width="1.300"/>
   <circle cx="61" cy="6.500" r="5.300" fill="#7d8088" stroke="#454850" stroke-width="0.800"/><circle cx="59.500" cy="5" r="2.200" fill="#dfe3ea"/><circle cx="62.500" cy="7.500" r="1.600" fill="#c04030"/><path d="M63.500,11.500l6,3" stroke="#c8d8f0" stroke-width="3"/>
   <ellipse cx="81" cy="8" rx="6.300" ry="8" fill="#141cb0"/><path d="M78,5l5.500,5.500l-2.700,2.800v-10.600l2.700,2.800l-5.500,5.500" fill="none" stroke="#e01818" stroke-width="1.400"/>
  </svg>
  <span class="abs" style="left:106px;top:9px;color:#fff;font-size:11px">13:54</span>
 </div>
</div>

</div></body></html>
